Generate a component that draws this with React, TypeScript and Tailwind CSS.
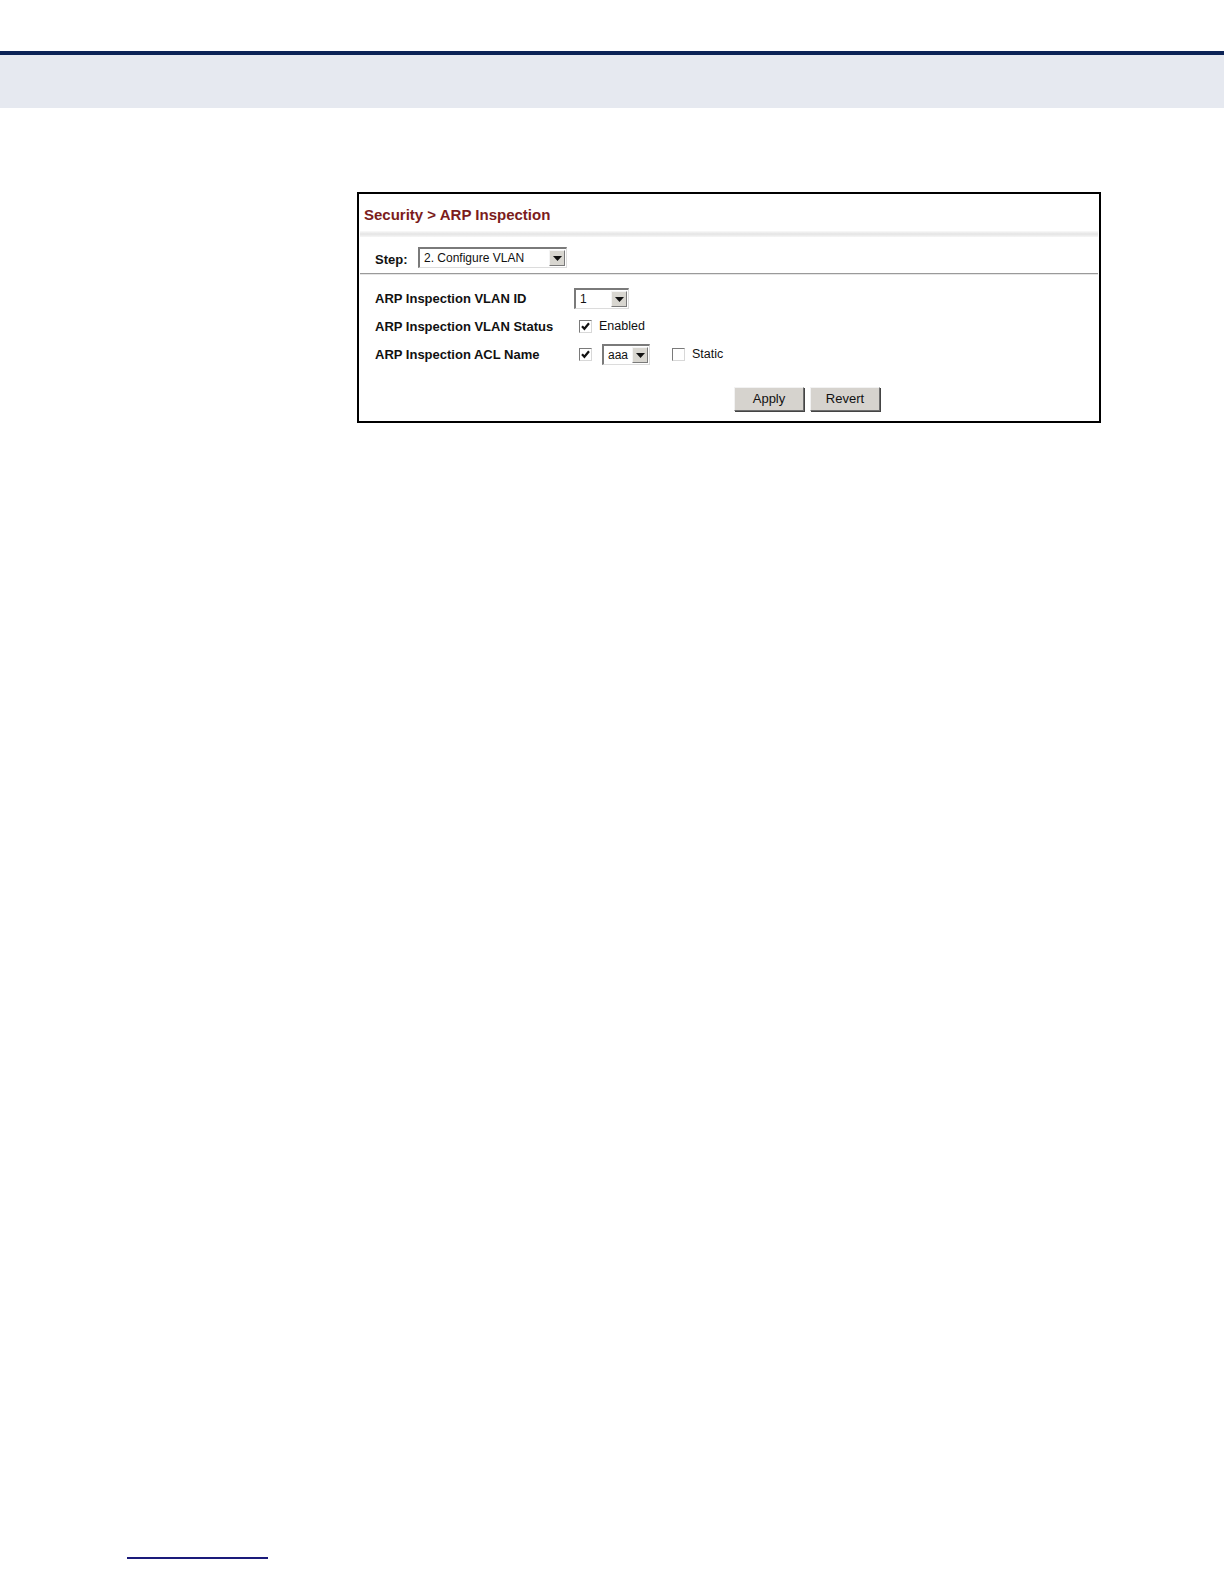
import React from 'react'

const font = { fontFamily: '"Liberation Sans", Arial, sans-serif' }

function Select({ value, width }: { value: string; width: string }) {
  return (
    <div
      className={`flex h-[21px] ${width} items-stretch border-t-2 border-l-2 border-t-[#7a7a7a] border-l-[#7a7a7a] border-b border-r border-b-[#dcdcdc] border-r-[#dcdcdc] bg-white`}
    >
      <div className="flex flex-1 items-center pl-[4px] text-[12px] text-[#111]">{value}</div>
      <div className="m-[1px] flex w-[16px] items-center justify-center border border-t-[#f4f4f4] border-l-[#f4f4f4] border-b-[#7a7a7a] border-r-[#7a7a7a] bg-[#d8d6d0]">
        <svg width="9" height="5" viewBox="0 0 9 5">
          <path d="M0 0h9L4.5 5z" fill="#111" />
        </svg>
      </div>
    </div>
  )
}

function Check({ checked }: { checked: boolean }) {
  return (
    <div className="flex h-[13px] w-[13px] items-center justify-center border border-t-[#7a7a7a] border-l-[#7a7a7a] border-b-[#d8d8d8] border-r-[#d8d8d8] bg-white">
      {checked && (
        <svg width="9" height="9" viewBox="0 0 9 9">
          <path d="M1 4.2l2.4 2.6L8 1.2" stroke="#111" strokeWidth="2.2" fill="none" />
        </svg>
      )}
    </div>
  )
}

function Button({ label }: { label: string }) {
  return (
    <div className="flex h-[24px] w-[70px] items-center justify-center border border-t-[#f2f2f2] border-l-[#f2f2f2] border-b-[#6e6e6e] border-r-[#6e6e6e] bg-[#d6d3ce] text-[13px] text-[#111] shadow-[1px_1px_0_#444]">
      {label}
    </div>
  )
}

export default function App() {
  return (
    <div className="relative min-h-[1584px] w-[1224px] bg-white" style={font}>
      <div className="h-[51px]" />
      <div className="h-[4px] bg-[#0c2356]" />
      <div className="h-[53px] bg-[#e6e9f0]" />

      <div className="ml-[357px] mt-[84px] w-[744px] border-2 border-black bg-white">
        <div className="px-[5px] pt-[10px] pb-[4px] text-[15px] font-bold text-[#7b1c1c]">
          Security &gt; ARP Inspection
        </div>
        <div className="mx-[1px] h-[6px] bg-gradient-to-b from-[#fafafa] via-[#e4e4e4] to-[#f6f6f6]" />

        <div className="flex items-center pl-[16px] pt-[10px] pb-[4px]">
          <span className="mt-[3px] w-[43px] text-[13px] font-bold text-[#111]">Step:</span>
          <Select value="2. Configure VLAN" width="w-[149px]" />
        </div>
        <div className="mx-[1px] h-[1px] bg-[#9a9a9a]" />
        <div className="mx-[1px] h-[1px] bg-[#e6e6e6]" />

        <div className="flex flex-col pl-[16px] pt-[13px]">
          <div className="flex h-[21px] items-center">
            <span className="w-[199px] text-[13px] font-bold text-[#111]">ARP Inspection VLAN ID</span>
            <Select value="1" width="w-[55px]" />
          </div>
          <div className="mt-[7px] flex h-[21px] items-center">
            <span className="w-[204px] text-[13px] font-bold text-[#111]">ARP Inspection VLAN Status</span>
            <Check checked />
            <span className="ml-[7px] text-[12.5px] text-[#111]">Enabled</span>
          </div>
          <div className="mt-[7px] flex h-[21px] items-center">
            <span className="w-[204px] text-[13px] font-bold text-[#111]">ARP Inspection ACL Name</span>
            <Check checked />
            <div className="ml-[10px]">
              <Select value="aaa" width="w-[48px]" />
            </div>
            <div className="ml-[22px]">
              <Check checked={false} />
            </div>
            <span className="ml-[7px] text-[12.5px] text-[#111]">Static</span>
          </div>
        </div>

        <div className="flex gap-[6px] pl-[375px] pt-[22px] pb-[10px]">
          <Button label="Apply" />
          <Button label="Revert" />
        </div>
      </div>

      <div className="absolute left-[127px] top-[1557px] h-[2px] w-[141px] bg-[#1a1a7a]" />
    </div>
  )
}
